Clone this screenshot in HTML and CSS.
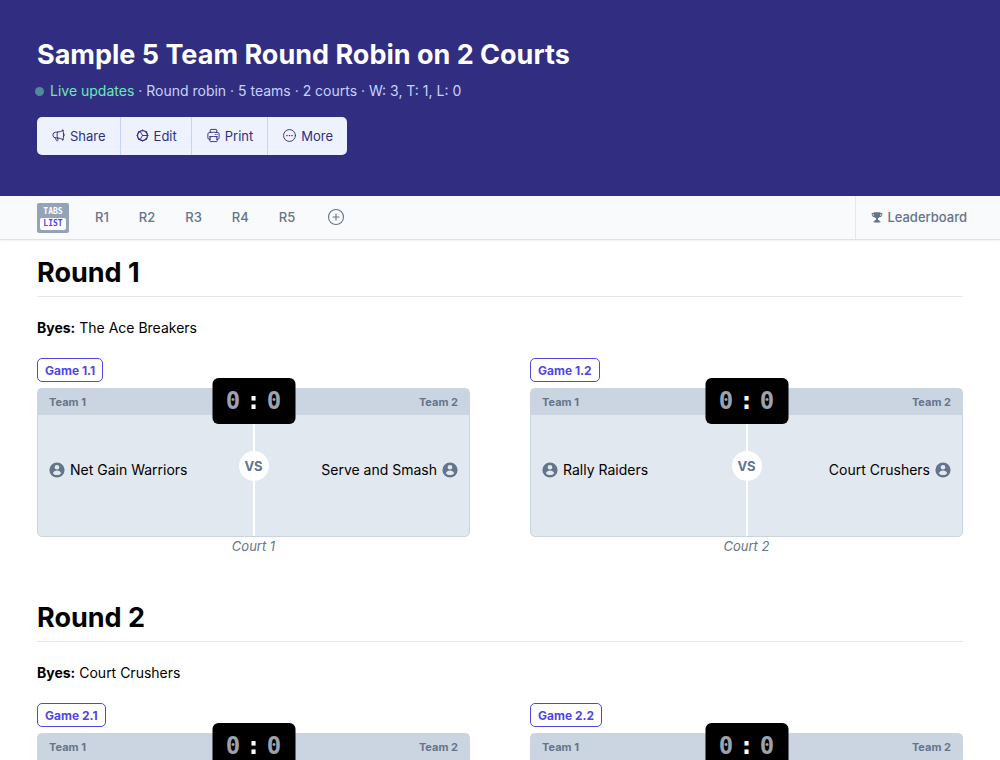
FILE: index.html
```html
<!DOCTYPE html>
<html lang="en">
<head>
  <meta charset="UTF-8" />
  <meta name="viewport" content="width=device-width, initial-scale=1.0"/>
  <title>Sample 5 Team Round Robin on 2 Courts</title>
  <link rel="stylesheet" href="styles.css">
</head>
<body>

  <!-- Shared icons -->
  <svg class="sprite" aria-hidden="true">
    <symbol id="icon-user" viewBox="0 0 16 16">
      <circle cx="8" cy="8" r="7.6" fill="#64748b"/>
      <circle cx="8" cy="5.2" r="2.3" fill="#e2e8f0"/>
      <path d="M3.9 11.2C4.5 9.4 6 8.5 8 8.5s3.500.9 4.100 2.700C11.200 12.500 9.700 13.100 8 13.100s-3.200-.6-4.100-1.900z" fill="#e2e8f0"/>
    </symbol>
  </svg>

  <header class="hero">
    <h1>Sample 5 Team Round Robin on 2 Courts</h1>
    <p class="meta"><span class="dot"></span><span class="live">Live updates</span> · Round robin · 5 teams · 2 courts · W: 3, T: 1, L: 0</p>

    <div class="actions">
      <button type="button">
        <svg class="icon" viewBox="0 0 24 24"><path d="M10.340 15.840c-.688-.06-1.386-.09-2.090-.09H7.500a4.500 4.500 0 1 1 0-9h.75c.704 0 1.402-.03 2.090-.09m0 9.180c.253.962.584 1.892.985 2.783.247.550.060 1.210-.463 1.511l-.657.380c-.551.318-1.260.117-1.527-.461a20.845 20.845 0 0 1-1.440-4.282m3.102.069a18.030 18.030 0 0 1-.590-4.590c0-1.586.205-3.124.590-4.590m0 9.180a23.848 23.848 0 0 1 8.835 2.535M10.340 6.660a23.847 23.847 0 0 0 8.835-2.535m0 0A23.740 23.740 0 0 0 18.795 3m.380 1.125a23.910 23.910 0 0 1 1.014 5.395m-1.014 8.855c-.118.380-.245.754-.380 1.125m.380-1.125a23.910 23.910 0 0 0 1.014-5.395m0-3.460c.495.413.811 1.035.811 1.730s-.316 1.317-.811 1.730m0-3.460a24.347 24.347 0 0 1 0 3.460"/></svg>
        Share
      </button>
      <button type="button">
        <svg class="icon" viewBox="0 0 24 24"><circle cx="12" cy="12" r="8" stroke-width="2"/><path d="M12 3v1M12 20v1M3 12h1M20 12h1M5.600 5.600l.7.7M17.700 17.700l.7.7M5.600 18.400l.7-.7M17.700 6.300l.7-.7M12 12h7.500M12 12 8.250 5.500M12 12l-3.750 6.500"/></svg>
        Edit
      </button>
      <button type="button">
        <svg class="icon" viewBox="0 0 24 24"><path d="M6.720 13.829c-.24.030-.480.062-.720.096m.720-.096a42.415 42.415 0 0 1 10.560 0m-10.560 0L6.340 18m10.940-4.171c.240.030.480.062.720.096m-.720-.096L17.660 18m0 0 .229 2.523a1.125 1.125 0 0 1-1.120 1.227H7.231c-.662 0-1.180-.568-1.120-1.227L6.340 18m11.318 0h1.091A2.250 2.250 0 0 0 21 15.750V9.456c0-1.081-.768-2.015-1.837-2.175a48.055 48.055 0 0 0-1.913-.247M6.340 18H5.250A2.250 2.250 0 0 1 3 15.750V9.456c0-1.081.768-2.015 1.837-2.175a48.041 48.041 0 0 1 1.913-.247m10.500 0a48.536 48.536 0 0 0-10.500 0m10.500 0V3.375c0-.621-.504-1.125-1.125-1.125h-8.250c-.621 0-1.125.504-1.125 1.125v3.659M18 10.500h.008v.008H18V10.500zm-3 0h.008v.008H15V10.500z"/></svg>
        Print
      </button>
      <button type="button">
        <svg class="icon" viewBox="0 0 24 24"><circle cx="12" cy="12" r="9.500"/><path d="M7.700 12h.6M11.700 12h.6M15.700 12h.6" stroke-width="2"/></svg>
        More
      </button>
    </div>
  </header>

  <nav class="tabs">
    <button type="button" class="view-toggle"><span>TABS</span><span class="on">LIST</span></button>
    <a href="#round-1">R1</a>
    <a href="#round-2">R2</a>
    <a href="#round-3">R3</a>
    <a href="#round-4">R4</a>
    <a href="#round-5">R5</a>
    <button type="button" class="add" aria-label="Add round">
      <svg class="icon" viewBox="0 0 24 24"><circle cx="12" cy="12" r="10"/><path d="M12 8v8M8 12h8"/></svg>
    </button>
    <a href="#leaderboard" class="leaderboard">
      <svg viewBox="0 0 16 16"><path fill="currentColor" d="M3.500 1.500h9v1.200H15v1.800c0 2-1.300 3.300-3.400 3.600-.6.800-1.400 1.400-2.300 1.700v1.900c1.200.3 2 1 2.300 2h.9v1.600h-9v-1.600h.9c.3-1 1.100-1.700 2.300-2V9.800c-.9-.3-1.700-.9-2.300-1.700C2.300 7.800 1 6.500 1 4.500V2.700h2.500zM2.200 3.900v.6c0 1.100.5 1.900 1.500 2.200-.2-.8-.3-1.800-.3-2.800zm10.400 0c0 1-.1 2-.3 2.800 1-.3 1.500-1.100 1.500-2.200v-.6z"/></svg>
      Leaderboard
    </a>
  </nav>

  <main>
    <!-- Round 1 -->
    <section class="round" id="round-1">
      <h2>Round 1</h2>
      <p class="byes"><b>Byes:</b> The Ace Breakers</p>
      <div class="games">
        <article class="game">
          <button type="button" class="badge">Game 1.1</button>
          <div class="card">
            <div class="card-head"><span>Team 1</span><span>Team 2</span></div>
            <div class="score"><span>0</span><b>:</b><span>0</span></div>
            <div class="card-body">
              <div class="team"><svg><use href="#icon-user"/></svg>Net Gain Warriors</div>
              <span class="vs">VS</span>
              <div class="team away">Serve and Smash<svg><use href="#icon-user"/></svg></div>
            </div>
          </div>
          <p class="court">Court 1</p>
        </article>
        <article class="game">
          <button type="button" class="badge">Game 1.2</button>
          <div class="card">
            <div class="card-head"><span>Team 1</span><span>Team 2</span></div>
            <div class="score"><span>0</span><b>:</b><span>0</span></div>
            <div class="card-body">
              <div class="team"><svg><use href="#icon-user"/></svg>Rally Raiders</div>
              <span class="vs">VS</span>
              <div class="team away">Court Crushers<svg><use href="#icon-user"/></svg></div>
            </div>
          </div>
          <p class="court">Court 2</p>
        </article>
      </div>
    </section>

    <!-- Round 2 -->
    <section class="round" id="round-2">
      <h2>Round 2</h2>
      <p class="byes"><b>Byes:</b> Court Crushers</p>
      <div class="games">
        <article class="game">
          <button type="button" class="badge">Game 2.1</button>
          <div class="card">
            <div class="card-head"><span>Team 1</span><span>Team 2</span></div>
            <div class="score"><span>0</span><b>:</b><span>0</span></div>
            <div class="card-body"></div>
          </div>
        </article>
        <article class="game">
          <button type="button" class="badge">Game 2.2</button>
          <div class="card">
            <div class="card-head"><span>Team 1</span><span>Team 2</span></div>
            <div class="score"><span>0</span><b>:</b><span>0</span></div>
            <div class="card-body"></div>
          </div>
        </article>
      </div>
    </section>
  </main>

</body>
</html>
```
FILE: styles.css
```css
* {
  box-sizing: border-box;
}
body {
  margin: 0;
  font-family: Inter, "Liberation Sans", sans-serif;
  font-size: 14px;
  line-height: 24px;
  color: #000;
  background: #fff;
}
h1, h2, p {
  margin: 0;
}
h1, h2 {
  font-size: 27px;
  line-height: 36px;
}
button {
  font-family: inherit;
  cursor: pointer;
}
.sprite {
  display: none;
}
.icon {
  width: 15px;
  height: 15px;
  fill: none;
  stroke: currentColor;
  stroke-width: 1.5;
  stroke-linecap: round;
  stroke-linejoin: round;
}

/* Header */
.hero {
  background: #312e81;
  padding: 37px 37px 41px;
}
.hero h1 {
  color: #fff;
}
.meta {
  margin-top: 6px;
  color: #c7d2fe;
}
.dot {
  display: inline-block;
  width: 9px;
  height: 9px;
  margin: 0 6px 0 -2px;
  border-radius: 50%;
  background: #4f8b9b;
}
.live {
  color: #6ee7b7;
}
.actions {
  display: inline-flex;
  margin-top: 14px;
  border-radius: 5px;
  overflow: hidden;
  background: #eef2ff;
  vertical-align: top;
}
.actions button {
  display: flex;
  align-items: center;
  gap: 4px;
  height: 38px;
  padding: 0 14px 1px;
  border: none;
  border-right: 1px solid #c7d2fe;
  background: none;
  color: #312e81;
  font-size: 13px;
}
.actions button:last-child {
  border-right: none;
}
.actions button:hover {
  background: #e0e7ff;
}

/* Round tabs */
.tabs {
  display: flex;
  align-items: center;
  height: 44px;
  padding-left: 37px;
  background: #f8fafc;
  border-bottom: 1px solid #dfe2e7;
  box-shadow: 0 1px 2px rgba(0,0,0,0.06);
}
.tabs a {
  margin-right: 30px;
  padding-bottom: 2px;
  color: #64748b;
  font-size: 13px;
  font-weight: 500;
  text-decoration: none;
}
.view-toggle {
  display: flex;
  flex-direction: column;
  width: 32px;
  margin-right: 26px;
  padding: 2px 3px 3px;
  border: none;
  border-radius: 2px;
  background: #94a3b8;
  color: #fff;
  font: bold 8px/12px "DejaVu Sans Mono", monospace;
}
.view-toggle span {
  line-height: 13px;
}
.view-toggle .on {
  border-radius: 2px;
  line-height: 12px;
  background: #fff;
  color: #4f46e5;
}
.add {
  display: flex;
  margin-left: 2px;
  padding: 0 0 2px;
  border: none;
  background: none;
  color: #64748b;
}
.add .icon {
  width: 18px;
  height: 18px;
}
.tabs .leaderboard {
  display: flex;
  align-items: center;
  gap: 4px;
  align-self: stretch;
  margin: 0 0 0 auto;
  padding: 0 33px 2px 15px;
  border-left: 1px solid #e2e8f0;
}
.leaderboard svg {
  width: 12px;
  height: 12px;
}

/* Rounds */
main {
  padding: 0 37px;
}
.round {
  padding-top: 15px;
  margin-bottom: 30px;
}
.round h2 {
  padding-bottom: 5px;
  border-bottom: 1px solid #e5e7eb;
}
.byes {
  margin: 19px 0 18px;
}
.games {
  display: grid;
  grid-template-columns: 1fr 1fr;
  gap: 60px;
}
.badge {
  display: block;
  height: 24px;
  margin-bottom: 6px;
  padding: 0 7px;
  border: 1px solid #4f46e5;
  border-radius: 5px;
  background: #fff;
  color: #4f46e5;
  font-size: 12px;
  font-weight: 700;
}
.card {
  position: relative;
  border: 1px solid #cbd5e1;
  border-radius: 5px;
  background: #e2e8f0;
}
.card-head {
  display: flex;
  justify-content: space-between;
  padding: 1px 11px;
  background: #cbd5e1;
  color: #64748b;
  font-size: 11px;
  font-weight: 700;
}
/* scoreboard hangs over the top edge of the card */
.score {
  position: absolute;
  z-index: 1;
  top: -11px;
  left: 50%;
  transform: translateX(-50%);
  display: flex;
  align-items: center;
  justify-content: center;
  gap: 6px;
  width: 83px;
  height: 46px;
  border-radius: 6px;
  background: #000;
  color: #9ca3af;
  font: bold 24px "DejaVu Sans Mono", monospace;
}
.score b {
  color: #fff;
}
.card-body {
  display: grid;
  grid-template-columns: 1fr 30px 1fr;
  align-items: center;
  height: 121px;
  padding: 0 11px;
  background: linear-gradient(#fff, #fff) center / 2px 100% no-repeat;
}
.team {
  display: flex;
  align-items: center;
  gap: 5px;
  padding-bottom: 12px;
}
.team svg {
  width: 16px;
  height: 16px;
}
.away {
  justify-content: flex-end;
}
.vs {
  width: 30px;
  height: 30px;
  margin-bottom: 20px;
  border-radius: 50%;
  background: #fff;
  color: #64748b;
  font-size: 13px;
  font-weight: 700;
  line-height: 30px;
  text-align: center;
}
.court {
  color: #64748b;
  font-size: 13px;
  font-style: italic;
  line-height: 18px;
  text-align: center;
}

@media (max-width: 700px) {
  .games {
    grid-template-columns: 1fr;
  }
  .tabs {
    overflow-x: auto;
  }
}
```
